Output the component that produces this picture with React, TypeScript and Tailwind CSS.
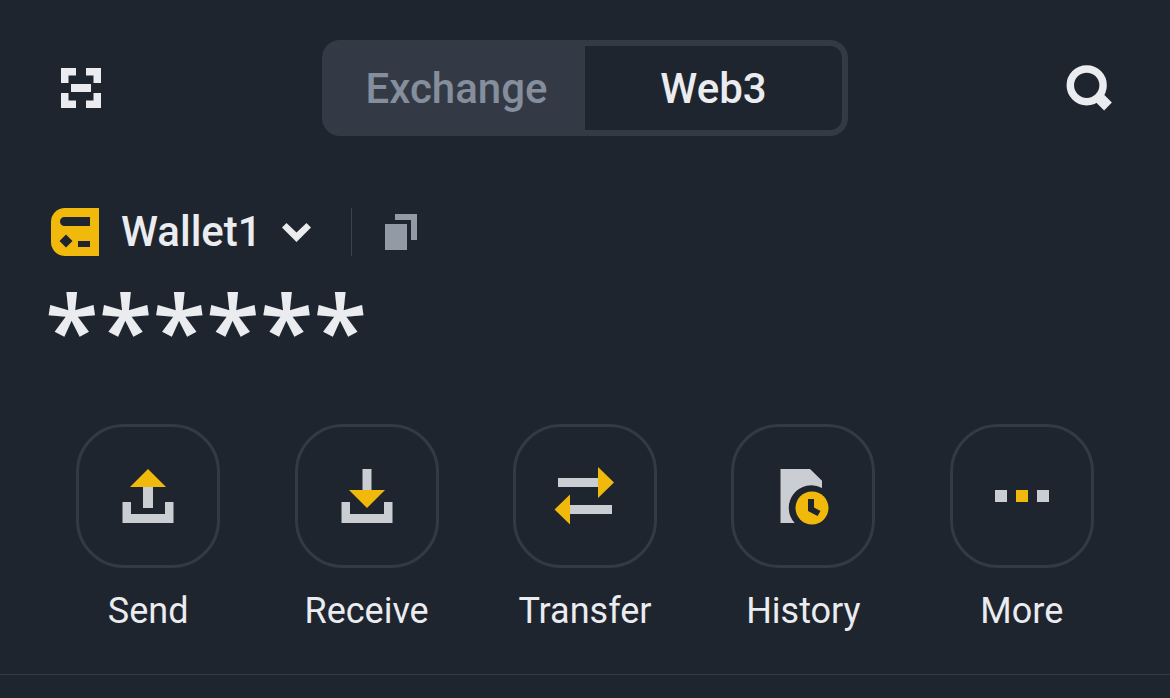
import { useState } from "react";
import type { ReactNode } from "react";

type Action = { label: string; icon: ReactNode };

const actions: Action[] = [
  {
    label: "Send",
    icon: (
      <>
        <path className="fill-[#cacdd2]" d="M31 26h10v22H31zM10.500 42H19v12h34V42h8.500v21h-51z" />
        <path className="fill-[#f0b90b]" d="M36 9l18 18H18z" />
      </>
    ),
  },
  {
    label: "Receive",
    icon: (
      <>
        <path className="fill-[#cacdd2]" d="M31.500 9h9v22h-9zM10.500 42H19v12h34V42h8.500v21h-51z" />
        <path className="fill-[#f0b90b]" d="M18 30h36L36 48z" />
      </>
    ),
  },
  {
    label: "Transfer",
    icon: (
      <>
        <path className="fill-[#cacdd2]" d="M9 18h41v9H9zM20 45h43v9H20z" />
        <path className="fill-[#f0b90b]" d="M49 7l16 15.500L49 38zM21 34.500v30l-15.500-15z" />
      </>
    ),
  },
  {
    label: "History",
    icon: (
      <>
        <path className="fill-[#cacdd2]" d="M13.500 9H43l12 11.700V28a22.500 22.500 0 0 0-27.300 35H13.500z" />
        <circle className="fill-[#f0b90b]" cx="45" cy="48" r="16.500" />
        <path className="fill-[#1f252f]" d="M41 39h6v8.500l6.500 3.500-3 5L41 51z" />
      </>
    ),
  },
  {
    label: "More",
    icon: (
      <>
        <path className="fill-[#cacdd2]" d="M9 30h12v12H9zM51 30h12v12H51z" />
        <path className="fill-[#f0b90b]" d="M30 30h12v12H30z" />
      </>
    ),
  },
];

const tabs = ["Exchange", "Web3"];

export default function App() {
  const [tab, setTab] = useState("Web3");

  return (
    <main className="min-h-screen bg-[#1f252f] pt-10 font-['Roboto',sans-serif] text-[#eaecef]">
      <header className="flex items-center justify-between px-[51px]">
        <button type="button" aria-label="Scan">
          <svg className="size-[60px] fill-current" viewBox="0 0 60 60" aria-hidden="true">
            <path d="M10 10h15v7.500h-7.500V25H10zM35 10h15v15h-7.500v-7.500H35zM10 35h7.500v7.500H25V50H10zM42.500 35H50v15H35v-7.500h7.500zM20 26h20v8H20z" />
          </svg>
        </button>

        <nav className="grid h-24 w-[526px] grid-cols-2 rounded-[18px] bg-[#343a45] p-1.5 text-[42px] font-medium">
          {tabs.map((name) => (
            <button
              key={name}
              type="button"
              aria-pressed={tab === name}
              onClick={() => setTab(name)}
              className={
                tab === name
                  ? "bg-[#1f252f] first:rounded-l-xl last:rounded-r-xl"
                  : "text-[#848e9c]"
              }
            >
              {name}
            </button>
          ))}
        </nav>

        <button type="button" aria-label="Search">
          <svg className="size-[60px]" viewBox="0 0 60 60" fill="none" stroke="currentColor" aria-hidden="true">
            <circle cx="27.700" cy="27.300" r="16.400" strokeWidth="7.500" />
            <path d="M38 37.500l11 11" strokeWidth="11" />
          </svg>
        </button>
      </header>

      <section className="mt-[72px] px-[45px]">
        <div className="flex h-12 items-center pl-1.5">
          <button type="button" className="flex items-center text-[42px] leading-[48px] font-medium">
            <svg className="size-12" viewBox="0 0 48 48" aria-hidden="true">
              <path className="fill-[#f0b90b]" d="M14 0h34v48H14A14 14 0 0 1 0 34V14A14 14 0 0 1 14 0z" />
              <path
                className="fill-[#1f252f]"
                d="M13.500 9H39v9H13.500a4.500 4.500 0 0 1 0-9zM15 26.500l6.500 6.500-6.500 6.500L8.500 33zM27 33h12v6H27z"
              />
            </svg>
            <span className="ml-[22px]">Wallet1</span>
            <svg className="ml-5 h-[19px] w-[29px] fill-current" viewBox="0 0 29 19" aria-hidden="true">
              <path d="M0 4.500L4.500 0l10 9.500 10-9.500L29 4.500 14.500 19z" />
            </svg>
          </button>
          <span className="ml-10 h-12 w-px bg-[#3b424d]" />
          <button type="button" aria-label="Copy address" className="ml-[33px]">
            <svg className="h-9 w-8 fill-[#929aa5]" viewBox="0 0 32 36" aria-hidden="true">
              <path d="M0 10h22v26H0zM10 0h22v26h-6V6H10z" />
            </svg>
          </button>
        </div>
        <p className="mt-8 h-20 font-['Open_Sans',sans-serif] text-[98px] leading-[80px] font-semibold">******</p>
      </section>

      <ul className="mt-14 grid grid-cols-5 px-[39px]">
        {actions.map(({ label, icon }) => (
          <li key={label} className="flex justify-center">
            <button type="button" className="flex flex-col items-center gap-5 text-[36px] leading-[46px]">
              <span className="flex size-36 items-center justify-center rounded-[48px] border-3 border-[#343a45]">
                <svg className="size-[72px]" viewBox="0 0 72 72" aria-hidden="true">
                  {icon}
                </svg>
              </span>
              {label}
            </button>
          </li>
        ))}
      </ul>

      <hr className="mt-10 border-[#343a45]" />
    </main>
  );
}
